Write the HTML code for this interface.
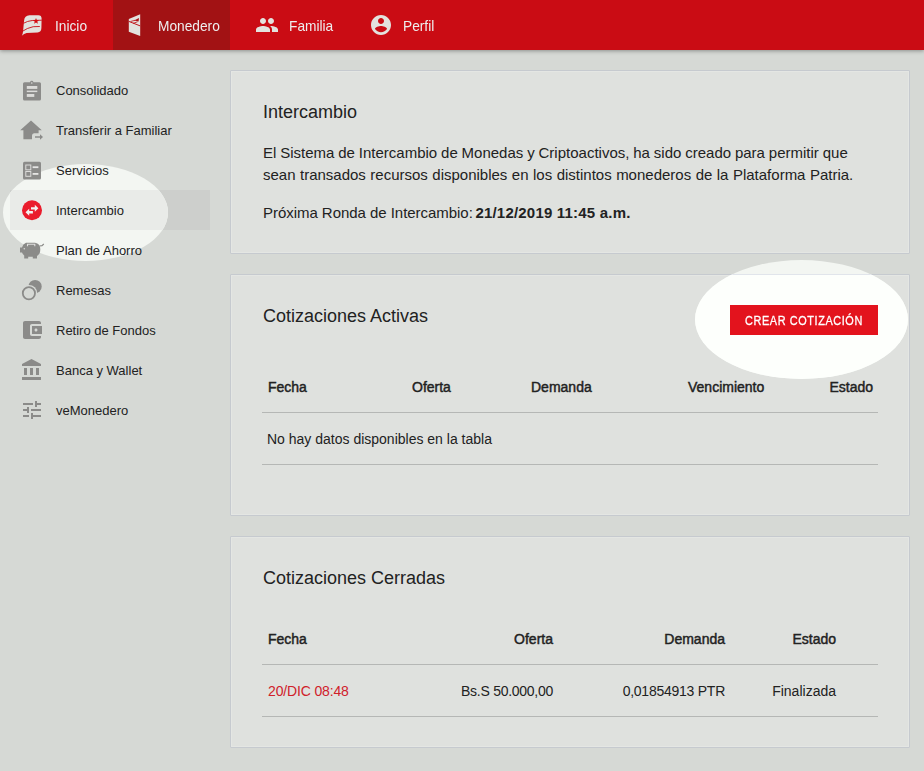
<!DOCTYPE html>
<html><head><meta charset="utf-8">
<style>
*{box-sizing:border-box;margin:0;padding:0}
html,body{width:924px;height:771px;overflow:hidden;background:#d6d9d5;font-family:"Liberation Sans",sans-serif;color:#222}
.a{position:absolute;white-space:nowrap;line-height:1}
#hdr{position:absolute;left:0;top:0;width:924px;height:50px;background:#ca0c14;box-shadow:0 1px 4px rgba(0,0,0,.35)}
#act{position:absolute;left:113px;top:0;width:117px;height:50px;background:#a21214}
.nav{font-size:15px;color:#eeeeee;top:18px;transform:scaleX(0.915);transform-origin:0 0}
.side{font-size:13px;color:#222;}
.card{position:absolute;left:230px;width:680px;background:#dfe1de;border:1px solid #c6cacf;border-radius:1px;box-shadow:inset 0 0 0 1px #e4e6e3}
.ttl{font-size:18px;color:#222}
.p{font-size:15px;color:#222}
.th{font-size:14px;color:#222;-webkit-text-stroke:0.45px #222}
.td{font-size:14px;color:#222}
.hl{position:absolute;height:1px;background:#b5b7b5;left:262px;width:616px}
svg{position:absolute}
.spot{position:absolute;clip-path:ellipse(50% 50% at 50% 50%)}
</style></head><body>
<div id="hdr"></div>
<div id="act"></div>

<!-- header icons -->
<svg style="left:18px;top:12px" width="28" height="26" viewBox="18 12 28 26">
  <path d="M29.5 15.2 L38.4 15.2 Q41.6 15.2 41.6 18.6 L41.4 28 Q41.2 32.3 37.6 32.4 L26.6 33.1 Q24 33.6 21.8 35.8 Q22.9 33.5 23.1 30.9 L23.6 25.5 L24.1 20.4 Q24.5 15.6 29.5 15.2 Z" fill="#e3e2de"/>
  <path d="M23.4 23.3 Q27.5 21 32.2 20.5 L41.8 20.2" stroke="#ca0c14" stroke-width="0.9" fill="none"/>
  <path d="M22.3 31.4 Q27 28 33.2 26.7 L39.8 26.5" stroke="#ca0c14" stroke-width="0.9" fill="none"/>
  <path d="M36 18 L36.8 20.1 L39 20.2 L37.3 21.6 L37.9 23.7 L36 22.5 L34.1 23.7 L34.7 21.6 L33 20.2 L35.2 20.1 Z" fill="#d40b12"/>
</svg>
<div class="a nav" style="left:55px">Inicio</div>

<svg style="left:122px;top:10px" width="26" height="30" viewBox="122 10 26 30">
  <path d="M128.8 19 L140.2 14.3 L140.2 36.1 L128.8 31.8 Z" fill="#e3e2de"/>
  <path d="M128.8 21.4 L140.2 25.9" stroke="#c01218" stroke-width="1" fill="none"/><path d="M134 20.4 L139 18 L138.6 21.6 Z" fill="#b01015"/><path d="M130.5 21.5 L135 20.3 M133 23.4 L137.5 21.8" stroke="#c01218" stroke-width="0.8" fill="none"/>
</svg>
<div class="a nav" style="left:158px">Monedero</div>

<svg style="left:254.7px;top:13px" width="24" height="24" viewBox="0 0 24 24">
  <path fill="#e3e2de" d="M16 11c1.66 0 2.99-1.34 2.99-3S17.66 5 16 5c-1.66 0-3 1.34-3 3s1.34 3 3 3zm-8 0c1.66 0 2.99-1.34 2.99-3S9.66 5 8 5C6.34 5 5 6.34 5 8s1.34 3 3 3zm0 2c-2.33 0-7 1.17-7 3.5V19h14v-2.5c0-2.33-4.67-3.5-7-3.5zm8 0c-.29 0-.62.02-.97.05 1.160.84 1.97 1.97 1.97 3.45V19h6v-2.5c0-2.330-4.670-3.5-7-3.5z"/>
</svg>
<div class="a nav" style="left:289px">Familia</div>

<svg style="left:369px;top:12.7px" width="24" height="24" viewBox="0 0 24 24">
  <path fill="#e3e2de" d="M12 2C6.48 2 2 6.48 2 12s4.48 10 10 10 10-4.48 10-10S17.520 2 12 2zm0 3c1.66 0 3 1.34 3 3s-1.34 3-3 3-3-1.34-3-3 1.34-3 3-3zm0 14.2c-2.5 0-4.71-1.28-6-3.22.03-1.99 4-3.08 6-3.08 1.99 0 5.97 1.09 6 3.08-1.29 1.94-3.5 3.22-6 3.22z"/>
</svg>
<div class="a nav" style="left:403px">Perfil</div>

<!-- sidebar -->
<div style="position:absolute;left:10px;top:190px;width:200px;height:40px;background:#cdcfcc"></div>
<div class="spot" style="left:3px;top:164px;width:165px;height:97px;background:#f3f6f2"><div style="position:absolute;left:7px;top:26px;width:200px;height:40px;background:#e9ebe8"></div></div>

<svg style="left:20px;top:78px" width="24" height="24" viewBox="20 78 24 24">
  <path fill="#8b8b89" d="M24.5 82.2 H30 A1.8 1.8 0 0 1 33.5 82.2 H39.5 Q41 82.2 41 83.7 V99 Q41 100.5 39.5 100.5 H24.5 Q23 100.5 23 99 V83.7 Q23 82.2 24.5 82.2 Z"/>
  <rect x="26.8" y="86" width="10.5" height="2.9" fill="#dcdcda"/>
  <rect x="26.8" y="90.6" width="10.5" height="1.5" fill="#dcdcda"/>
  <rect x="26.8" y="94" width="7.5" height="2.9" fill="#dcdcda"/>
  <circle cx="31.8" cy="83" r="0.8" fill="#dcdcda"/>
</svg>
<div class="a side" style="left:56px;top:83.5px">Consolidado</div>

<svg style="left:18px;top:118px" width="28" height="24" viewBox="18 118 28 24">
  <path fill="#8b8b89" d="M31 120.6 L41.8 130.2 L38.6 130.2 L38.6 133.2 L34 133.2 Q32 133.5 32 135.5 L32 139.2 L23.4 139.2 L23.4 130.2 L20.2 130.2 Z"/>
  <path fill="#8b8b89" d="M35 136.2 H40 V134.3 L43 137 L40 139.7 V137.8 H35 Z"/>
</svg>
<div class="a side" style="left:56px;top:123.5px">Transferir a Familiar</div>

<svg style="left:20px;top:158px" width="24" height="24" viewBox="20 158 24 24">
  <rect x="23" y="161.7" width="18" height="17.8" rx="1.5" fill="#8b8b89"/>
  <rect x="25.8" y="165" width="5" height="4.8" fill="none" stroke="#dcdcda" stroke-width="1"/>
  <rect x="25.8" y="171.5" width="5" height="4.8" fill="none" stroke="#dcdcda" stroke-width="1"/>
  <rect x="32.6" y="166.3" width="5.8" height="1.8" fill="#e6e6e4"/>
  <rect x="32.6" y="173" width="5.8" height="1.8" fill="#e6e6e4"/>
</svg>
<div class="a side" style="left:56px;top:163.5px">Servicios</div>

<svg style="left:20px;top:198px" width="24" height="24" viewBox="20 198 24 24">
  <circle cx="32" cy="210.3" r="10" fill="#ea1c2c"/>
  <path fill="#f2f2f0" d="M31 207.2 H34.8 V204.8 L38.4 208.3 L34.8 211.8 V209.5 H31 Z"/>
  <path fill="#f2f2f0" d="M32.9 211 H29.2 V208.8 L25.5 212.3 L29.2 215.8 V213.6 H32.9 Z"/>
</svg>
<div class="a side" style="left:56px;top:203.5px">Intercambio</div>

<svg style="left:18px;top:238px" width="28" height="24" viewBox="18 238 28 24">
  <path fill="#8b8b89" d="M26 242.8 H35 Q40.3 243.5 40.3 249.5 Q40.3 254 37 256 V258.6 H32.8 V256.8 H28.2 V258.6 H24.2 V255.6 Q22.5 254 22 252.6 H20 V247.6 H22 Q22.8 244 26 242.8 Z"/>
  <path d="M39.5 246 L42 245.6 L43.8 244" stroke="#8b8b89" stroke-width="1.2" fill="none"/>
  <path d="M27.5 246.3 V244.3 H34.8 V246.3" stroke="#e0e0de" stroke-width="1.1" fill="none"/>
  <circle cx="24.3" cy="248.8" r="0.8" fill="#d8d8d6"/>
</svg>
<div class="a side" style="left:56px;top:243.5px">Plan de Ahorro</div>

<svg style="left:18px;top:278px" width="28" height="24" viewBox="18 278 28 24">
  <defs><mask id="m1"><rect x="18" y="278" width="28" height="24" fill="#fff"/><circle cx="28.9" cy="293.2" r="8.3" fill="#000"/></mask></defs>
  <circle cx="35.1" cy="286.5" r="6.6" fill="#8b8b89" mask="url(#m1)"/>
  <circle cx="28.9" cy="293.2" r="6.1" fill="none" stroke="#8b8b89" stroke-width="1.8"/>
</svg>
<div class="a side" style="left:56px;top:283.5px">Remesas</div>

<svg style="left:20px;top:318px" width="24" height="24" viewBox="0 0 24 24">
  <path fill="#8b8b89" d="M21 18v1c0 1.1-.9 2-2 2H5c-1.11 0-2-.9-2-2V5c0-1.1.89-2 2-2h14c1.1 0 2 .9 2 2v1h-9c-1.11 0-2 .9-2 2v8c0 1.1.89 2 2 2h9zm-9-2h10V8H12v8zm4-2.5c-.83 0-1.5-.67-1.5-1.5s.67-1.5 1.5-1.5 1.5.67 1.5 1.5-.67 1.5-1.5 1.5z"/>
</svg>
<div class="a side" style="left:56px;top:323.5px">Retiro de Fondos</div>

<svg style="left:20px;top:358px" width="24" height="24" viewBox="0 0 24 24">
  <path fill="#8b8b89" d="M4 10v7h3v-7H4zm6 0v7h3v-7h-3zM2 22h19v-3H2v3zm14-12v7h3v-7h-3zm-4.5-9L2 6v2h19V6l-9.5-5z"/>
</svg>
<div class="a side" style="left:56px;top:363.5px">Banca y Wallet</div>

<svg style="left:20px;top:398px" width="24" height="24" viewBox="0 0 24 24">
  <path fill="#8b8b89" d="M3 17v2h6v-2H3zM3 5v2h10V5H3zm10 16v-2h8v-2h-8v-2h-2v6h2zM7 9v2H3v2h4v2h2V9H7zm14 4v-2H11v2h10zm-6-4h2V7h4V5h-4V3h-2v6z"/>
</svg>
<div class="a side" style="left:56px;top:403.5px">veMonedero</div>

<!-- card 1 -->
<div class="card" style="top:70px;height:184px"></div>
<div class="a ttl" style="left:263px;top:103px">Intercambio</div>
<div class="a p" style="left:263px;top:145px;word-spacing:-0.3px">El Sistema de Intercambio de Monedas y Criptoactivos, ha sido creado para permitir que</div>
<div class="a p" style="left:263px;top:167.3px;word-spacing:0.3px">sean transados recursos disponibles en los distintos monederos de la Plataforma Patria.</div>
<div class="a p" style="left:263px;top:205.3px;letter-spacing:-0.04px">Próxima Ronda de Intercambio: <b style="margin-left:-1.5px;letter-spacing:0.2px">21/12/2019 11:45 a.m.</b></div>

<!-- card 2 -->
<div class="card" style="top:274px;height:242px"></div>
<div class="a ttl" style="left:263px;top:307.2px">Cotizaciones Activas</div>
<div style="position:absolute;left:730px;top:305px;width:148px;height:30px;background:#c8111a"></div>
<div class="a" style="left:744.5px;top:314.6px;font-size:12.5px;color:#f7f3f3;letter-spacing:0.7px;-webkit-text-stroke:0.3px #f7f3f3;transform:scaleX(0.87);transform-origin:0 0">CREAR COTIZACIÓN</div>
<div class="a th" style="left:268px;top:380px">Fecha</div>
<div class="a th" style="left:412px;top:380px">Oferta</div>
<div class="a th" style="left:531px;top:380px">Demanda</div>
<div class="a th" style="left:688px;top:380px">Vencimiento</div>
<div class="a th" style="right:51px;top:380px">Estado</div>
<div class="hl" style="top:412px"></div>
<div class="a td" style="left:267px;top:432.1px">No hay datos disponibles en la tabla</div>
<div class="hl" style="top:464px"></div>

<!-- card 3 -->
<div class="card" style="top:536px;height:212px"></div>
<div class="a ttl" style="left:263px;top:569px">Cotizaciones Cerradas</div>
<div class="a th" style="left:268px;top:632px">Fecha</div>
<div class="a th" style="right:371px;top:632px">Oferta</div>
<div class="a th" style="right:199px;top:632px">Demanda</div>
<div class="a th" style="right:88px;top:632px">Estado</div>
<div class="hl" style="top:664px"></div>
<div class="a td" style="left:268px;top:684.2px;color:#d0202a;letter-spacing:-0.15px">20/DIC 08:48</div>
<div class="a td" style="right:371px;top:684.2px;letter-spacing:-0.27px">Bs.S 50.000,00</div>
<div class="a td" style="right:199px;top:684.2px;letter-spacing:-0.25px">0,01854913 PTR</div>
<div class="a td" style="right:88px;top:684.2px">Finalizada</div>
<div class="hl" style="top:716px"></div>

<div class="spot" style="left:695px;top:260px;width:213px;height:119px;background:#f3f6f2">
<div style="position:absolute;left:-465px;top:14px;width:680px;height:242px;background:#fdfffc;border:1px solid #e1e5eb;box-shadow:inset 0 0 0 1px #fdfffc"></div>
<div style="position:absolute;left:35px;top:45px;width:148px;height:30px;background:#e3131d"></div>
<div class="a" style="left:49.5px;top:54.6px;font-size:12.5px;color:#fff;letter-spacing:0.7px;-webkit-text-stroke:0.3px #fff;transform:scaleX(0.87);transform-origin:0 0">CREAR COTIZACIÓN</div>
</div>
</body></html>
